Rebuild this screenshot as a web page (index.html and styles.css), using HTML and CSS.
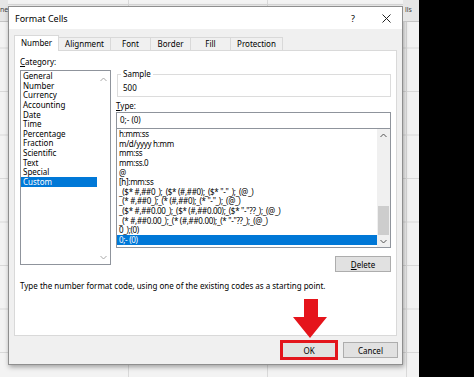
FILE: index.html
```html
<!DOCTYPE html>
<html lang="en">
<head>
    <meta charset="UTF-8">
    <title>Format Cells</title>
    <link rel="stylesheet" href="styles.css">
</head>
<body>
    <div class="screen">
        <div class="sheet">
            <div class="strip strip-left">
                <div class="ribbon">ne</div>
            </div>
            <div class="dialog-slot">
                <div class="dialog">
                    <div class="titlebar">
                        <span class="title">Format Cells</span>
                        <span class="help">?</span>
                        <svg class="close" width="9" height="9" viewBox="0 0 9 9">
                            <path d="M0.5 0.5 L8.5 8.5 M8.5 0.5 L0.5 8.5" stroke="#222" stroke-width="1" fill="none"/>
                        </svg>
                    </div>
                    <div class="tabs">
                        <div class="tab tab-number active">Number</div>
                        <div class="tab tab-align">Alignment</div>
                        <div class="tab tab-font">Font</div>
                        <div class="tab tab-border">Border</div>
                        <div class="tab tab-fill">Fill</div>
                        <div class="tab tab-protect">Protection</div>
                    </div>
                    <div class="pane">
                        <div class="cols">
                            <div class="cat-col">
                                <div class="label"><u>C</u>ategory:</div>
                                <div class="listbox cat-list">
                                    <ul class="items">
                                        <li>General</li>
                                        <li>Number</li>
                                        <li>Currency</li>
                                        <li>Accounting</li>
                                        <li>Date</li>
                                        <li>Time</li>
                                        <li>Percentage</li>
                                        <li>Fraction</li>
                                        <li>Scientific</li>
                                        <li>Text</li>
                                        <li>Special</li>
                                        <li class="selected">Custom</li>
                                    </ul>
                                    <div class="mini-scroll">
                                        <svg width="7" height="5" viewBox="0 0 7 5"><path d="M0.5 4 L3.5 1 L6.5 4" stroke="#a8a8a8" fill="none"/></svg>
                                        <svg width="7" height="5" viewBox="0 0 7 5"><path d="M0.5 1 L3.5 4 L6.5 1" stroke="#a8a8a8" fill="none"/></svg>
                                    </div>
                                </div>
                            </div>
                            <div class="type-col">
                                <div class="sample">
                                    <span class="sample-title">Sample</span>
                                    <div class="sample-value">500</div>
                                </div>
                                <div class="label type-label"><u>T</u>ype:</div>
                                <div class="type-input">0;- (0)</div>
                                <div class="listbox type-list">
                                    <ul class="items codes">
                                        <li>h:mm:ss</li>
                                        <li>m/d/yyyy h:mm</li>
                                        <li>mm:ss</li>
                                        <li>mm:ss.0</li>
                                        <li>@</li>
                                        <li>[h]:mm:ss</li>
                                        <li>_($* #,##0_);_($* (#,##0);_($* "-"_);_(@_)</li>
                                        <li>_(* #,##0_);_(* (#,##0);_(* "-"_);_(@_)</li>
                                        <li>_($* #,##0.00_);_($* (#,##0.00);_($* "-"??_);_(@_)</li>
                                        <li>_(* #,##0.00_);_(* (#,##0.00);_(* "-"??_);_(@_)</li>
                                        <li>0_);(0)</li>
                                        <li class="selected">0;- (0)</li>
                                    </ul>
                                    <div class="scrollbar">
                                        <svg width="7" height="5" viewBox="0 0 7 5"><path d="M0.5 4 L3.5 1 L6.5 4" stroke="#555" fill="none"/></svg>
                                        <div class="track"><div class="thumb"></div></div>
                                        <svg width="7" height="5" viewBox="0 0 7 5"><path d="M0.5 1 L3.5 4 L6.5 1" stroke="#555" fill="none"/></svg>
                                    </div>
                                </div>
                                <div class="delete-row">
                                    <button class="btn btn-delete"><u>D</u>elete</button>
                                </div>
                            </div>
                        </div>
                        <p class="hint">Type the number format code, using one of the existing codes as a starting point.</p>
                    </div>
                    <div class="footer">
                        <div class="ok-wrap">
                            <!-- annotation arrow pointing at OK -->
                            <svg class="red-arrow" width="36" height="40" viewBox="0 0 36 40">
                                <polygon points="12,0 26,0 26,18 35,18 18,39 1,18 12,18" fill="#e5141b"/>
                            </svg>
                            <button class="btn btn-ok">OK</button>
                        </div>
                        <button class="btn btn-cancel">Cancel</button>
                    </div>
                </div>
            </div>
            <div class="strip strip-right">
                <div class="ribbon">lls</div>
            </div>
        </div>
        <div class="blackout"></div>
    </div>
</body>
</html>
```

FILE: styles.css
```css
* {
    box-sizing: border-box;
}

body {
    margin: 0;
    width: 474px;
    height: 377px;
    overflow: hidden;
    font-family: "Noto Sans", "Open Sans", sans-serif;
    font-size: 8px;
    color: #000;
}

.screen {
    display: flex;
    height: 377px;
}

/* excel sheet behind the dialog */
.sheet {
    width: 419px;
    display: grid;
    grid-template-columns: 8px 395px 16px;
    background-color: #f3f3f3;
    background-image: linear-gradient(to bottom, #d9d9d9 1px, transparent 1px),
                      linear-gradient(to right, #d9d9d9 1px, transparent 1px);
    background-size: 100% 43.5px, 139px 100%;
    background-position: 0 4px, 128px 0;
}

.blackout {
    flex: 1;
    background: #000;
}

.strip {
    overflow: hidden;
}

.ribbon {
    height: 22px;
    background: #e6e6e6;
    border-bottom: 1px solid #c4c4c4;
    line-height: 20px;
    font-size: 7px;
    color: #444;
    white-space: nowrap;
}

.strip-right .ribbon {
    padding-left: 2px;
}

.dialog-slot {
    padding-top: 6px;
}

.dialog {
    height: 359px;
    background: #f0f0f0;
    border: 1px solid #8f8f8f;
    box-shadow: 1px 2px 5px rgba(0, 0, 0, 0.35);
    display: flex;
    flex-direction: column;
}

.titlebar {
    height: 22px;
    background: #fff;
    display: flex;
    align-items: center;
    padding: 0 11px 0 6px;
}

.title {
    font-size: 9px;
}

.help {
    margin-left: auto;
    margin-right: 27px;
    font-size: 9px;
}

.tabs {
    height: 21px;
    display: flex;
    align-items: flex-end;
    padding-left: 5px;
}

.tab {
    height: 13px;
    line-height: 12px;
    text-align: center;
    border: 1px solid #d9d9d9;
    border-bottom: none;
    background: #f0f0f0;
    margin-left: -1px;
}

.tab.active {
    height: 16px;
    line-height: 14px;
    background: #fff;
    margin-left: 0;
    margin-bottom: -1px;
    position: relative;
    z-index: 1;
}

.tab-number { width: 45px; }
.tab-align { width: 53px; }
.tab-font { width: 41px; }
.tab-border { width: 41px; }
.tab-fill { width: 41px; }
.tab-protect { width: 53px; }

.pane {
    margin: 0 5px;
    height: 286px;
    background: #fff;
    border: 1px solid #d9d9d9;
    padding: 5px 5px 0 5px;
}

.cols {
    display: flex;
    gap: 5px;
}

.cat-col {
    width: 91px;
}

.type-col {
    width: 275px;
}

.label {
    height: 14px;
    line-height: 12px;
}

.listbox {
    border: 1px solid #8f949c;
    display: flex;
}

.items {
    list-style: none;
    margin: 0;
    padding: 0;
    flex: 1;
    min-width: 0;
    overflow: hidden;
}

.items li {
    height: 9.65px;
    line-height: 9.65px;
    padding-left: 2px;
    white-space: nowrap;
}

.items li.selected {
    background: #0078d7;
    color: #fff;
}

.cat-list {
    height: 195px;
}

.mini-scroll {
    width: 13px;
    display: flex;
    flex-direction: column;
    justify-content: space-between;
    align-items: center;
    padding: 6px 0 4px;
}

.sample {
    margin: 18px 0 0 1px;
    height: 23px;
    border: 1px solid #dcdcdc;
    padding: 0 5px;
}

.sample-title {
    display: block;
    width: fit-content;
    margin: -7px 0 0 -2px;
    padding: 0 2px;
    line-height: 12px;
    background: #fff;
}

.sample-value {
    margin-top: 2px;
    line-height: 12px;
}

.type-label {
    margin-top: 3px;
    height: 12px;
}

.type-input {
    height: 16px;
    border: 1px solid #8f949c;
    border-bottom: none;
    line-height: 14px;
    padding-left: 3px;
}

.type-list {
    height: 120px;
}

.codes li {
    font-size: 8px;
    letter-spacing: -0.3px;
}

.scrollbar {
    width: 13px;
    background: #f0f0f0;
    display: flex;
    flex-direction: column;
    align-items: center;
    padding: 4px 0 3px;
}

.track {
    flex: 1;
    width: 100%;
    padding: 0 1px;
    display: flex;
    flex-direction: column;
    justify-content: flex-end;
    padding-bottom: 4px;
}

.thumb {
    height: 29px;
    background: #cdcdcd;
}

.delete-row {
    display: flex;
    justify-content: flex-end;
    margin-top: 8px;
}

.btn {
    font-family: inherit;
    font-size: 8px;
    color: #000;
    background: #e1e1e1;
    border: 1px solid #adadad;
    padding: 0;
    margin: 0;
}

.btn-delete {
    width: 56px;
    height: 16px;
}

.hint {
    margin: 8px 0 0;
    line-height: 12px;
}

.footer {
    flex: 1;
    display: flex;
    justify-content: flex-end;
    align-items: center;
    gap: 5px;
    padding-right: 4px;
}

.ok-wrap {
    position: relative;
}

.red-arrow {
    position: absolute;
    left: 12px;
    top: -41px;
}

.btn-ok {
    width: 58px;
    height: 20px;
    border: 3px solid #e3141c;
}

.btn-cancel {
    width: 55px;
    height: 16px;
}
```
